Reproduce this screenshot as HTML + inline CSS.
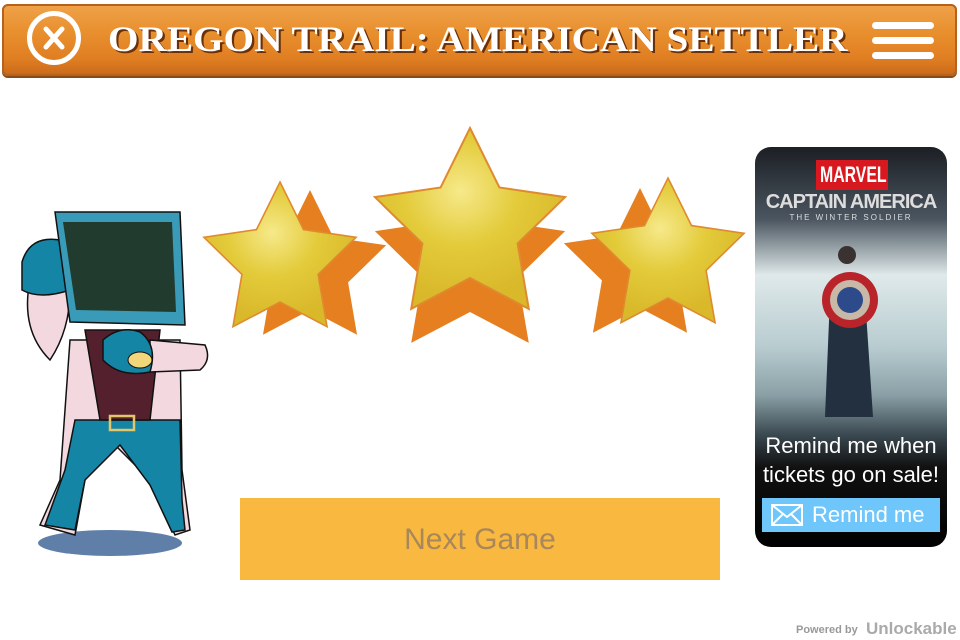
<!DOCTYPE html>
<html><head><meta charset="utf-8"><style>
body{margin:0;width:960px;height:640px;background:#fff;position:relative;overflow:hidden;font-family:"Liberation Sans",sans-serif}
.board{position:absolute;left:2px;top:4px;width:955px;height:72px;background:linear-gradient(180deg,#f0a24a 0%,#e88f2e 40%,#e07f22 75%,#c9691a 100%);border-radius:6px;box-shadow:0 2px 0 #8a4a14,inset 0 0 0 2px #b5621c}
.title{position:absolute;left:108px;top:18px;font-family:"Liberation Serif",serif;font-weight:bold;font-size:36px;color:#fff;white-space:nowrap;transform:scaleX(1.09);transform-origin:left;text-shadow:2px 2px 0 #6a300a}
.x{position:absolute;left:27px;top:11px;width:54px;height:54px;border:5px solid #fff;border-radius:50%;box-sizing:border-box}
.ham{position:absolute;left:872px;width:62px;height:7px;background:#fff;border-radius:4px}
.btn{position:absolute;left:240px;top:498px;width:480px;height:82px;background:#f9b840;color:#a8875a;font-size:30px;text-align:center;line-height:84px}
.ad{position:absolute;left:755px;top:147px;width:192px;height:400px;border-radius:16px;overflow:hidden;background:linear-gradient(180deg,#1c1f24 0%,#4a5560 18%,#dfe9ea 32%,#b8ccd0 50%,#8aa0a6 62%,#3a4850 72%,#111 80%,#000 100%)}
</style></head><body>
<div class="board"></div>
<div class="x"><svg width="44" height="44" style="position:absolute;left:0;top:0"><path d="M14 13 L30 31 M30 13 L14 31" stroke="#fff" stroke-width="5" stroke-linecap="round"/></svg></div>
<div class="title">OREGON TRAIL: AMERICAN SETTLER</div>
<div class="ham" style="top:22px"></div><div class="ham" style="top:37px"></div><div class="ham" style="top:52px"></div>

<svg width="960" height="640" style="position:absolute;left:0;top:0">
<defs>
<polygon id="st" points="0,-1 .294,-.405 .951,-.309 .476,.155 .588,.809 0,.5 -.588,.809 -.476,.155 -.951,-.309 -.294,-.405"/>
<radialGradient id="yg" cx="0.45" cy="0.35" r="0.6"><stop offset="0" stop-color="#f6e98a"/><stop offset="0.5" stop-color="#e3cb3a"/><stop offset="1" stop-color="#d9b82a"/></radialGradient>
</defs>
<use href="#st" transform="translate(310,270) scale(80)" fill="#e57f20"/>
<use href="#st" transform="translate(280,262) scale(80)" fill="url(#yg)" stroke="#e08a30" stroke-width="0.02"/>
<use href="#st" transform="translate(470,262) scale(100)" fill="#e57f20"/>
<use href="#st" transform="translate(470,228) scale(100)" fill="url(#yg)" stroke="#e08a30" stroke-width="0.02"/>
<use href="#st" transform="translate(640,268) scale(80)" fill="#e57f20"/>
<use href="#st" transform="translate(668,258) scale(80)" fill="url(#yg)" stroke="#e08a30" stroke-width="0.02"/>

<ellipse cx="110" cy="543" rx="72" ry="13" fill="#5f7fa8"/>
<path d="M70 340 L60 480 L40 525 L75 535 L85 480 L110 440 L150 480 L175 535 L190 530 L182 470 L180 340 Z" fill="#f3d9df" stroke="#111" stroke-width="1.5"/>
<path d="M75 420 L180 420 L182 500 L185 530 L172 532 L150 485 L120 445 L85 480 L75 530 L45 525 L65 470 Z" fill="#1585a5" stroke="#111" stroke-width="1.5"/>
<path d="M85 330 L160 330 L150 420 L100 420 Z" fill="#55202d" stroke="#111" stroke-width="1.5"/>
<rect x="110" y="416" width="24" height="14" fill="none" stroke="#e3c56b" stroke-width="2.5"/>
<path d="M30 280 Q20 330 50 360 Q70 330 70 290 Z" fill="#f3d9df" stroke="#111" stroke-width="1.5"/>
<path d="M22 262 Q30 235 60 240 L70 290 Q40 300 22 290 Z" fill="#1585a5" stroke="#111" stroke-width="1.5"/>
<path d="M55 212 L180 212 L185 325 L70 322 Z" fill="#3a9bb8" stroke="#111" stroke-width="1.5"/>
<path d="M63 222 L172 222 L176 312 L76 310 Z" fill="#213b2f"/>
<path d="M150 340 L205 345 Q212 360 200 370 L150 372 Z" fill="#f3d9df" stroke="#111" stroke-width="1.5"/>
<path d="M103 340 Q120 325 140 332 Q158 345 150 372 Q120 378 103 360 Z" fill="#1585a5" stroke="#111" stroke-width="1.5"/>
<ellipse cx="140" cy="360" rx="12" ry="8" fill="#f2d67a" stroke="#111" stroke-width="1"/>
</svg>

<div class="ad">
<div style="position:absolute;left:61px;top:13px;width:72px;height:30px;background:#d7181f;overflow:hidden"><div style="position:absolute;left:4px;top:0;color:#fff;font-weight:bold;font-size:22px;line-height:30px;white-space:nowrap;transform:scaleX(0.72);transform-origin:left">MARVEL</div></div>
<div style="position:absolute;left:0;width:192px;top:44px;text-align:center;color:#ddd;font-weight:bold;font-size:20px;letter-spacing:-1px">CAPTAIN AMERICA</div>
<div style="position:absolute;left:0;width:192px;top:66px;text-align:center;color:#ddd;font-size:8px;letter-spacing:2px">THE WINTER SOLDIER</div>
<svg width="192" height="200" style="position:absolute;left:0;top:90px"><path d="M75 60 L110 60 L118 180 L70 180 Z" fill="#233040"/><circle cx="95" cy="63" r="28" fill="#b8242a"/><circle cx="95" cy="63" r="20" fill="#c8b8a8"/><circle cx="95" cy="63" r="13" fill="#2d4a8a"/><circle cx="92" cy="18" r="9" fill="#3a3230"/></svg>
<div style="position:absolute;left:0;width:192px;top:284px;text-align:center;color:#fff;font-size:22px;line-height:29px">Remind me when<br>tickets go on sale!</div>
<div style="position:absolute;left:7px;top:351px;width:178px;height:34px;background:#6ec6fb;color:#fff;font-size:22px;line-height:34px"><svg width="32" height="22" style="position:absolute;left:9px;top:6px"><rect x="1" y="1" width="30" height="20" fill="none" stroke="#fff" stroke-width="2"/><path d="M1 1 L16 13 L31 1 M1 21 L12 10 M31 21 L20 10" stroke="#fff" stroke-width="2" fill="none"/></svg><span style="position:absolute;left:50px">Remind me</span></div>
</div>

<div class="btn">Next Game</div>
<div style="position:absolute;left:796px;top:624px;font-size:11px;font-weight:bold;color:#999">Powered by</div>
<div style="position:absolute;left:866px;top:619px;font-size:17px;font-weight:bold;color:#aaa">Unlockable</div>
</body></html>
